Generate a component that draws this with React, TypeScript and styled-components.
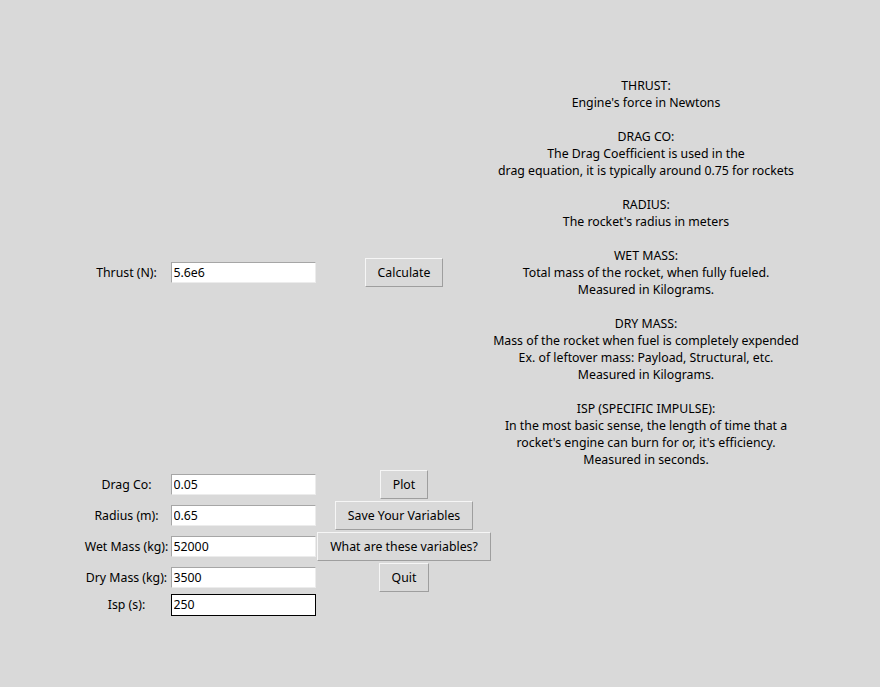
import React from "react";
import styled, { createGlobalStyle } from "styled-components";

const FONT = `"Noto Sans", "Open Sans", sans-serif`;
const SIZE = "12.3px";

const GlobalStyle = createGlobalStyle`
  html, body {
    margin: 0;
    padding: 0;
    background: #d9d9d9;
  }
  body {
    font-family: ${FONT};
    font-size: ${SIZE};
    color: #000;
  }
`;

const Window = styled.div`
  width: 880px;
  height: 687px;
  box-sizing: border-box;
  background: #d9d9d9;
  padding: 76px 0 0 83px;
  overflow: hidden;
`;

const FormGrid = styled.div`
  display: grid;
  grid-template-columns: 87px 146px 176px 308px;
  grid-template-rows: 393px 31px 31px 31px 31px 23px;
  align-items: center;
  justify-items: center;
`;

const FieldLabel = styled.span`
  font-size: ${SIZE};
  line-height: 17px;
  white-space: nowrap;
`;

const Entry = styled.input<{ $focused?: boolean }>`
  box-sizing: border-box;
  width: 145px;
  height: ${(p) => (p.$focused ? "22px" : "21px")};
  margin: 0;
  padding: 0 2px;
  font-family: ${FONT};
  font-size: ${SIZE};
  color: #000;
  background: #ffffff;
  border-style: solid;
  border-width: 1px;
  border-color: ${(p) =>
    p.$focused ? "#000000" : "#a6a6a6 #ececec #ececec #a6a6a6"};
  outline: none;
  border-radius: 0;
`;

const TkButton = styled.button`
  box-sizing: border-box;
  height: 29px;
  margin: 0;
  padding: 0 12px;
  font-family: ${FONT};
  font-size: ${SIZE};
  line-height: 17px;
  color: #000;
  background: #d9d9d9;
  border-style: solid;
  border-width: 1px;
  border-color: #f6f6f6 #9e9e9e #9e9e9e #f6f6f6;
  border-radius: 0;
  white-space: nowrap;
  cursor: default;
`;

const InfoText = styled.div`
  grid-column: 4;
  grid-row: 1;
  font-size: ${SIZE};
  line-height: 17px;
  text-align: center;
  white-space: pre;
`;

const info = [
  "THRUST:",
  "Engine's force in Newtons",
  "",
  "DRAG CO:",
  "The Drag Coefficient is used in the",
  "drag equation, it is typically around 0.75 for rockets",
  "",
  "RADIUS:",
  "The rocket's radius in meters",
  "",
  "WET MASS:",
  "Total mass of the rocket, when fully fueled.",
  "Measured in Kilograms.",
  "",
  "DRY MASS:",
  "Mass of the rocket when fuel is completely expended",
  "Ex. of leftover mass: Payload, Structural, etc.",
  "Measured in Kilograms.",
  "",
  "ISP (SPECIFIC IMPULSE):",
  "In the most basic sense, the length of time that a",
  "rocket's engine can burn for or, it's efficiency.",
  "Measured in seconds.",
].join("\n");

type Row = { label: string; value: string; button?: string; focused?: boolean };

const rows: Row[] = [
  { label: "Thrust (N):", value: "5.6e6", button: "Calculate" },
  { label: "Drag Co:", value: "0.05", button: "Plot" },
  { label: "Radius (m):", value: "0.65", button: "Save Your Variables" },
  { label: "Wet Mass (kg):", value: "52000", button: "What are these variables?" },
  { label: "Dry Mass (kg):", value: "3500", button: "Quit" },
  { label: "Isp (s):", value: "250", focused: true },
];

export default function App() {
  return (
    <>
      <GlobalStyle />
      <Window>
        <FormGrid>
          {rows.map((r, i) => (
            <React.Fragment key={r.label}>
              <FieldLabel style={{ gridRow: i + 1, gridColumn: 1 }}>{r.label}</FieldLabel>
              <Entry
                style={{ gridRow: i + 1, gridColumn: 2 }}
                $focused={r.focused}
                defaultValue={r.value}
                readOnly
              />
              {r.button && (
                <TkButton style={{ gridRow: i + 1, gridColumn: 3 }}>{r.button}</TkButton>
              )}
            </React.Fragment>
          ))}
          <InfoText>{info}</InfoText>
        </FormGrid>
      </Window>
    </>
  );
}
